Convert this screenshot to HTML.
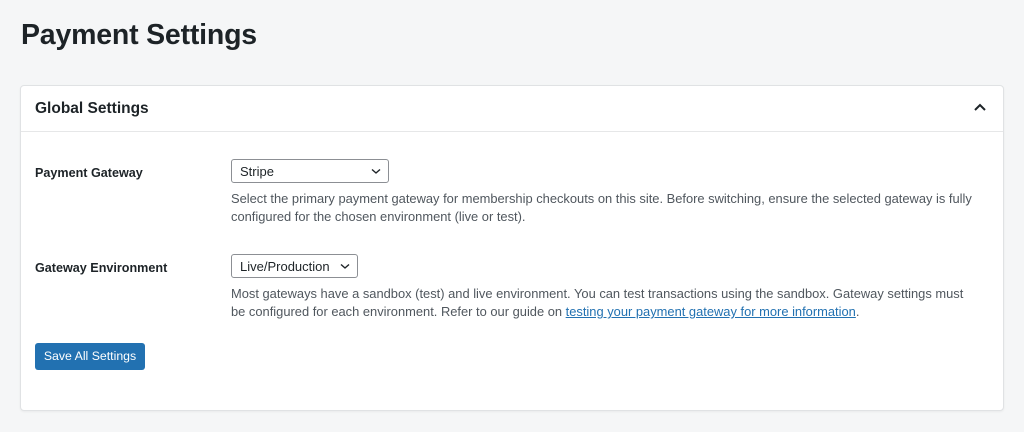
<!DOCTYPE html>
<html><head><style>
body{margin:0;width:1024px;height:432px;background:#f5f6f7;font-family:"Liberation Sans",sans-serif;color:#1d2327;overflow:hidden;position:relative}
h1{position:absolute;left:21px;top:19px;margin:0;font-size:28.5px;font-weight:bold;letter-spacing:-0.2px}
.card{position:absolute;left:20px;top:85px;width:982px;height:324px;background:#fff;border:1px solid #e0e2e4;border-radius:4px;box-shadow:0 1px 2px rgba(0,0,0,.05)}
.hd{height:45px;border-bottom:1px solid #e6e7e8;position:relative}
.hd span{position:absolute;left:14px;top:14px;font-size:15.5px;font-weight:bold}
.lab{position:absolute;left:14px;font-size:12.6px;font-weight:bold}
.sel{position:absolute;left:210px;height:24px;border:1px solid #8c8f94;border-radius:3px;font-size:13px;line-height:24px;padding-left:8px;box-sizing:border-box}
.sel svg{position:absolute;right:7px;top:8px}
.desc{position:absolute;left:210px;width:760px;font-size:12.9px;line-height:18px;color:#50575e}
a{color:#2271b1}
.btn{position:absolute;left:14px;top:257px;width:110px;height:27px;background:#2271b1;color:#fff;border-radius:3px;font-size:12.3px;line-height:27px;text-align:center}
</style></head><body>
<h1>Payment Settings</h1>
<div class="card">
<div class="hd"><span>Global Settings</span>
<svg style="position:absolute;right:17px;top:17px" width="12" height="8" viewBox="0 0 12 8"><path d="M1 7 L6 2 L11 7" fill="none" stroke="#1d2327" stroke-width="2"/></svg></div>
<div class="lab" style="top:80px">Payment Gateway</div>
<div class="sel" style="top:73px;width:158px">Stripe<svg width="10" height="7" viewBox="0 0 10 7"><path d="M1 1.5 L5 5 L9 1.5" fill="none" stroke="#1d2327" stroke-width="1.4"/></svg></div>
<div class="desc" style="top:104px">Select the primary payment gateway for membership checkouts on this site. Before switching, ensure the selected gateway is fully configured for the chosen environment (live or test).</div>
<div class="lab" style="top:175px">Gateway Environment</div>
<div class="sel" style="top:168px;width:127px">Live/Production<svg width="10" height="7" viewBox="0 0 10 7"><path d="M1 1.5 L5 5 L9 1.5" fill="none" stroke="#1d2327" stroke-width="1.4"/></svg></div>
<div class="desc" style="top:199px">Most gateways have a sandbox (test) and live environment. You can test transactions using the sandbox. Gateway settings must<br>be configured for each environment. Refer to our guide on <a href="#">testing your payment gateway for more information</a>.</div>
<div class="btn">Save All Settings</div>
</div>
</body></html>
